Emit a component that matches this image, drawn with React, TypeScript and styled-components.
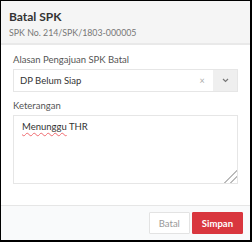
import React from 'react';
import styled, { createGlobalStyle } from 'styled-components';

const GlobalStyle = createGlobalStyle`
	html, body {
		margin: 0;
		padding: 0;
		background: #000;
	}
	* {
		box-sizing: border-box;
	}
`;

const App = () => {
	return (
		<>
			<GlobalStyle />
			<Modal>
				<Header>
					<Title>Batal SPK</Title>
					<SubTitle>SPK No. 214/SPK/1803-000005</SubTitle>
				</Header>

				<Body>
					<Label>Alasan Pengajuan SPK Batal</Label>
					<Select>
						<SelectValue>DP Belum Siap</SelectValue>
						<ClearIcon>×</ClearIcon>
						<ArrowBox>
							<svg width="7" height="5" viewBox="0 0 7 5">
								<path d="M1 1l2.5 2.5L6 1" fill="none" stroke="#777" strokeWidth="1.2" />
							</svg>
						</ArrowBox>
					</Select>

					<Label $spaced>Keterangan</Label>
					<TextArea>
						<Misspelled>Menunggu</Misspelled> THR
					</TextArea>
				</Body>

				<Footer>
					<Button>Batal</Button>
					<Button $primary>Simpan</Button>
				</Footer>
			</Modal>
		</>
	);
};

export default App;

const Modal = styled.div`
	width: 252px;
	height: 242px;
	border-style: solid;
	border-color: #000;
	border-width: 1px 2px 2px 1px;
	background: #fff;
	display: flex;
	flex-direction: column;
	font-family: Lato, 'Liberation Sans', sans-serif;
	color: #333;
`;

const Header = styled.div`
	height: 44px;
	background: #f5f5f5;
	border-bottom: 2px solid #e9e9e9;
	padding: 9px 8px 0;
`;

const Title = styled.div`
	font-size: 12px;
	font-weight: 700;
	line-height: 14px;
	color: #333;
`;

const SubTitle = styled.div`
	margin-top: 3px;
	font-size: 8.8px;
	line-height: 12px;
	color: #777;
`;

const Body = styled.div`
	flex: 1;
	padding: 9px 12px 0;
	display: flex;
	flex-direction: column;
`;

const Label = styled.div<{ $spaced?: boolean }>`
	font-size: 9.5px;
	line-height: 12px;
	color: #555;
	margin-top: ${({ $spaced }) => ($spaced ? '8px' : '0')};
	margin-bottom: 3px;
`;

const Select = styled.div`
	height: 23px;
	border: 1px solid #e6e6e6;
	display: flex;
	align-items: center;
`;

const SelectValue = styled.div`
	flex: 1;
	padding-left: 6px;
	font-size: 9.5px;
	color: #333;
`;

const ClearIcon = styled.span`
	width: 14px;
	font-size: 9px;
	color: #aaa;
	text-align: center;
	margin-right: 4px;
`;

const ArrowBox = styled.div`
	width: 24px;
	align-self: stretch;
	background: #efefef;
	display: flex;
	align-items: center;
	justify-content: center;
`;

const TextArea = styled.div`
	height: 69px;
	border: 1px solid #e6e6e6;
	padding: 4px 8px;
	font-size: 9.5px;
	line-height: 13px;
	color: #333;
	resize: vertical;
	overflow: auto;

	&::-webkit-resizer {
		background:
			linear-gradient(135deg, transparent 55%, #bbb 55%, #bbb 62%, transparent 62%, transparent 75%, #bbb 75%, #bbb 82%, transparent 82%);
	}
`;

const Misspelled = styled.span`
	text-decoration: underline wavy #ef6a6f;
	text-decoration-thickness: 1px;
	text-underline-offset: 2px;
`;

const Footer = styled.div`
	height: 35px;
	border-top: 1px solid #e6e6e6;
	background: #f9fafb;
	display: flex;
	justify-content: flex-end;
	align-items: flex-start;
	gap: 2px;
	padding: 6px 7px 0;
`;

const Button = styled.button<{ $primary?: boolean }>`
	height: 22px;
	padding: 0 9px;
	font-family: Lato, 'Liberation Sans', sans-serif;
	font-size: 9.5px;
	border: 1px solid ${({ $primary }) => ($primary ? '#d9363e' : '#e3e3e3')};
	background: ${({ $primary }) => ($primary ? '#d9363e' : '#fff')};
	color: ${({ $primary }) => ($primary ? '#fff' : '#999')};
	font-weight: ${({ $primary }) => ($primary ? 700 : 400)};
	border-radius: 1px;
	min-width: ${({ $primary }) => ($primary ? '50px' : '38px')};
`;
